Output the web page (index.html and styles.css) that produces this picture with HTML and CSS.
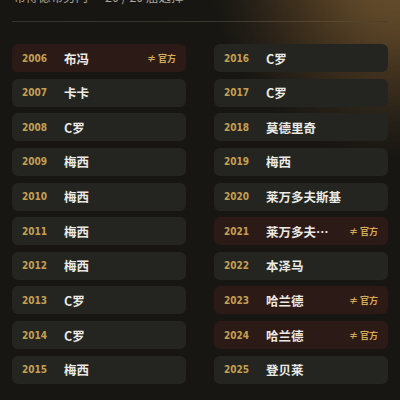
FILE: index.html
```html
<!DOCTYPE html>
<html lang="zh">
<head>
<meta charset="utf-8">
<link rel="stylesheet" href="styles.css">
</head>
<body>
<div class="page">
  <div class="head"><span>布得德布劳内</span><span class="count">20 / 20 届选择</span></div>
  <div class="divider"></div>
  <div class="grid">
    <div class="card off"><span class="year">2006</span><span class="name">布冯</span><span class="badge">≠ 官方</span></div>
    <div class="card"><span class="year">2016</span><span class="name">C罗</span></div>
    <div class="card"><span class="year">2007</span><span class="name">卡卡</span></div>
    <div class="card"><span class="year">2017</span><span class="name">C罗</span></div>
    <div class="card"><span class="year">2008</span><span class="name">C罗</span></div>
    <div class="card"><span class="year">2018</span><span class="name">莫德里奇</span></div>
    <div class="card"><span class="year">2009</span><span class="name">梅西</span></div>
    <div class="card"><span class="year">2019</span><span class="name">梅西</span></div>
    <div class="card"><span class="year">2010</span><span class="name">梅西</span></div>
    <div class="card"><span class="year">2020</span><span class="name">莱万多夫斯基</span></div>
    <div class="card"><span class="year">2011</span><span class="name">梅西</span></div>
    <div class="card off"><span class="year">2021</span><span class="name">莱万多夫斯基</span><span class="badge">≠ 官方</span></div>
    <div class="card"><span class="year">2012</span><span class="name">梅西</span></div>
    <div class="card"><span class="year">2022</span><span class="name">本泽马</span></div>
    <div class="card"><span class="year">2013</span><span class="name">C罗</span></div>
    <div class="card off"><span class="year">2023</span><span class="name">哈兰德</span><span class="badge">≠ 官方</span></div>
    <div class="card"><span class="year">2014</span><span class="name">C罗</span></div>
    <div class="card off"><span class="year">2024</span><span class="name">哈兰德</span><span class="badge">≠ 官方</span></div>
    <div class="card"><span class="year">2015</span><span class="name">梅西</span></div>
    <div class="card"><span class="year">2025</span><span class="name">登贝莱</span></div>
  </div>
</div>
</body>
</html>
```
FILE: styles.css
```css
html, body {
  margin: 0;
  padding: 0;
  height: 100%;
}
body {
  background-color: #171612;
  background-image: radial-gradient(circle 190px at 400px -30px, #6a5130 0%, #5a4427 30%, #3d2f1d 58%, #241f17 82%, rgba(23, 22, 18, 0) 100%);
  background-repeat: no-repeat;
  font-family: "Noto Sans CJK SC", "Noto Sans", sans-serif;
  overflow: hidden;
}
.page {
  padding: 0 12px;
}
.head {
  display: flex;
  gap: 17px;
  margin-top: -10px;
  height: 14px;
  line-height: 14px;
  font-size: 12.5px;
  color: #aaa59c;
  padding-left: 1px;
}
.divider {
  margin-top: 17px;
  height: 1px;
  background: linear-gradient(90deg, #36342f 0%, #3a3730 55%, #5a4a30 85%, #4a3e2a 100%);
}
.grid {
  display: grid;
  grid-template-columns: 1fr 1fr;
  column-gap: 28px;
  row-gap: 6.63px;
  margin-top: 22px;
}
.card {
  height: 28px;
  box-sizing: border-box;
  border-radius: 6px;
  background: #242521;
  display: flex;
  align-items: center;
  padding: 0 10px;
  min-width: 0;
}
.card.off {
  background: #2c1a16;
}
.year {
  flex: 0 0 42px;
  font-family: "Liberation Sans Narrow", "DejaVu Sans Condensed", "Liberation Sans", sans-serif;
  font-weight: 700;
  font-size: 10px;
  color: #c4a052;
}
.name {
  flex: 1 1 auto;
  min-width: 0;
  white-space: nowrap;
  overflow: hidden;
  text-overflow: ellipsis;
  font-size: 12.5px;
  font-weight: 700;
  color: #ebe9e3;
}
.badge {
  flex: 0 0 auto;
  margin-left: 8px;
  font-size: 9px;
  font-weight: 700;
  color: #d2ab55;
}
```
